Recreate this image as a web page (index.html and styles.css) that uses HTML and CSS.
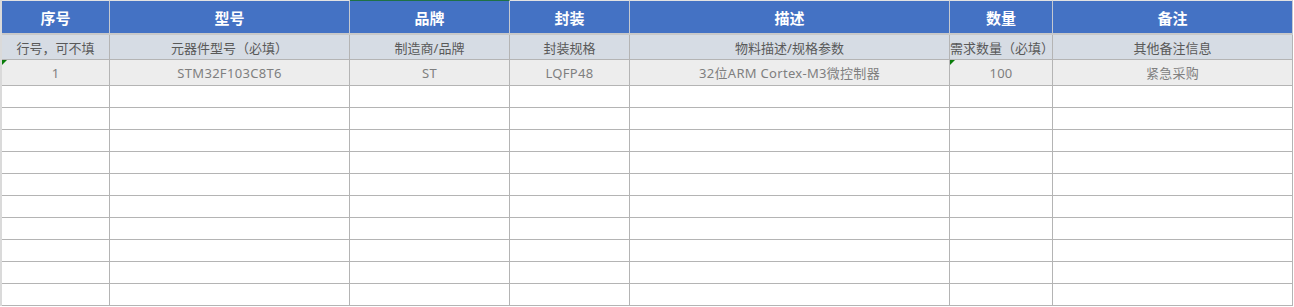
FILE: index.html
```html
<!DOCTYPE html>
<html lang="zh-CN">
<head>
<meta charset="utf-8">
<title>BOM 模板</title>
<link rel="stylesheet" href="styles.css">
</head>
<body>
<div class="sheet">
  <div class="cell head">序号</div>
  <div class="cell head">型号</div>
  <div class="cell head head-active">品牌</div>
  <div class="cell head">封装</div>
  <div class="cell head">描述</div>
  <div class="cell head">数量</div>
  <div class="cell head">备注</div>

  <div class="cell hint">行号，可不填</div>
  <div class="cell hint">元器件型号（必填）</div>
  <div class="cell hint">制造商/品牌</div>
  <div class="cell hint">封装规格</div>
  <div class="cell hint">物料描述/规格参数</div>
  <div class="cell hint hint-tight">需求数量（必填）</div>
  <div class="cell hint">其他备注信息</div>

  <div class="cell sample flag">1</div>
  <div class="cell sample">STM32F103C8T6</div>
  <div class="cell sample">ST</div>
  <div class="cell sample">LQFP48</div>
  <div class="cell sample">32位ARM Cortex-M3微控制器</div>
  <div class="cell sample flag">100</div>
  <div class="cell sample">紧急采购</div>

  <div class="cell"></div><div class="cell"></div><div class="cell"></div><div class="cell"></div><div class="cell"></div><div class="cell"></div><div class="cell"></div>
  <div class="cell"></div><div class="cell"></div><div class="cell"></div><div class="cell"></div><div class="cell"></div><div class="cell"></div><div class="cell"></div>
  <div class="cell"></div><div class="cell"></div><div class="cell"></div><div class="cell"></div><div class="cell"></div><div class="cell"></div><div class="cell"></div>
  <div class="cell"></div><div class="cell"></div><div class="cell"></div><div class="cell"></div><div class="cell"></div><div class="cell"></div><div class="cell"></div>
  <div class="cell"></div><div class="cell"></div><div class="cell"></div><div class="cell"></div><div class="cell"></div><div class="cell"></div><div class="cell"></div>
  <div class="cell"></div><div class="cell"></div><div class="cell"></div><div class="cell"></div><div class="cell"></div><div class="cell"></div><div class="cell"></div>
  <div class="cell"></div><div class="cell"></div><div class="cell"></div><div class="cell"></div><div class="cell"></div><div class="cell"></div><div class="cell"></div>
  <div class="cell"></div><div class="cell"></div><div class="cell"></div><div class="cell"></div><div class="cell"></div><div class="cell"></div><div class="cell"></div>
  <div class="cell"></div><div class="cell"></div><div class="cell"></div><div class="cell"></div><div class="cell"></div><div class="cell"></div><div class="cell"></div>
  <div class="cell"></div><div class="cell"></div><div class="cell"></div><div class="cell"></div><div class="cell"></div><div class="cell"></div><div class="cell"></div>
</div>
</body>
</html>
```

FILE: styles.css
```css
html, body {
  margin: 0;
  padding: 0;
  background: #ffffff;
}

body {
  font-family: "Noto Sans", "Noto Sans CJK SC", sans-serif;
}

.sheet {
  display: grid;
  grid-template-columns: 108px 240px 160px 120px 320px 103px 240px;
  grid-auto-rows: 22px;
  grid-template-rows: 35px 25px 26px;
  border-left: 2px solid #dadada;
  width: max-content;
}

.cell {
  box-sizing: border-box;
  border-right: 1px solid #b4b4b4;
  border-bottom: 1px solid #b4b4b4;
  display: flex;
  align-items: center;
  justify-content: center;
  white-space: nowrap;
  overflow: hidden;
  position: relative;
  background: #ffffff;
}

.head {
  background: #4472c4;
  color: #ffffff;
  font-family: "Noto Sans CJK SC", sans-serif;
  font-weight: 700;
  font-size: 15px;
  border-top: 1px solid #e2e2e2;
  border-right-color: #c4c8d0;
  border-bottom: 2px solid #c9c9c9;
}

.head-active {
  border-top-color: #1e7145;
}

.hint {
  background: #d6dce4;
  color: #595959;
  font-size: 13px;
}

.hint-tight {
  justify-content: flex-start;
}

.sample {
  background: #ededed;
  color: #7f7f7f;
  font-size: 13px;
  letter-spacing: 0.3px;
}

.flag::before {
  content: "";
  position: absolute;
  top: 0;
  left: 0;
  width: 0;
  height: 0;
  border-top: 5px solid #0a7d0a;
  border-right: 5px solid transparent;
}
```
